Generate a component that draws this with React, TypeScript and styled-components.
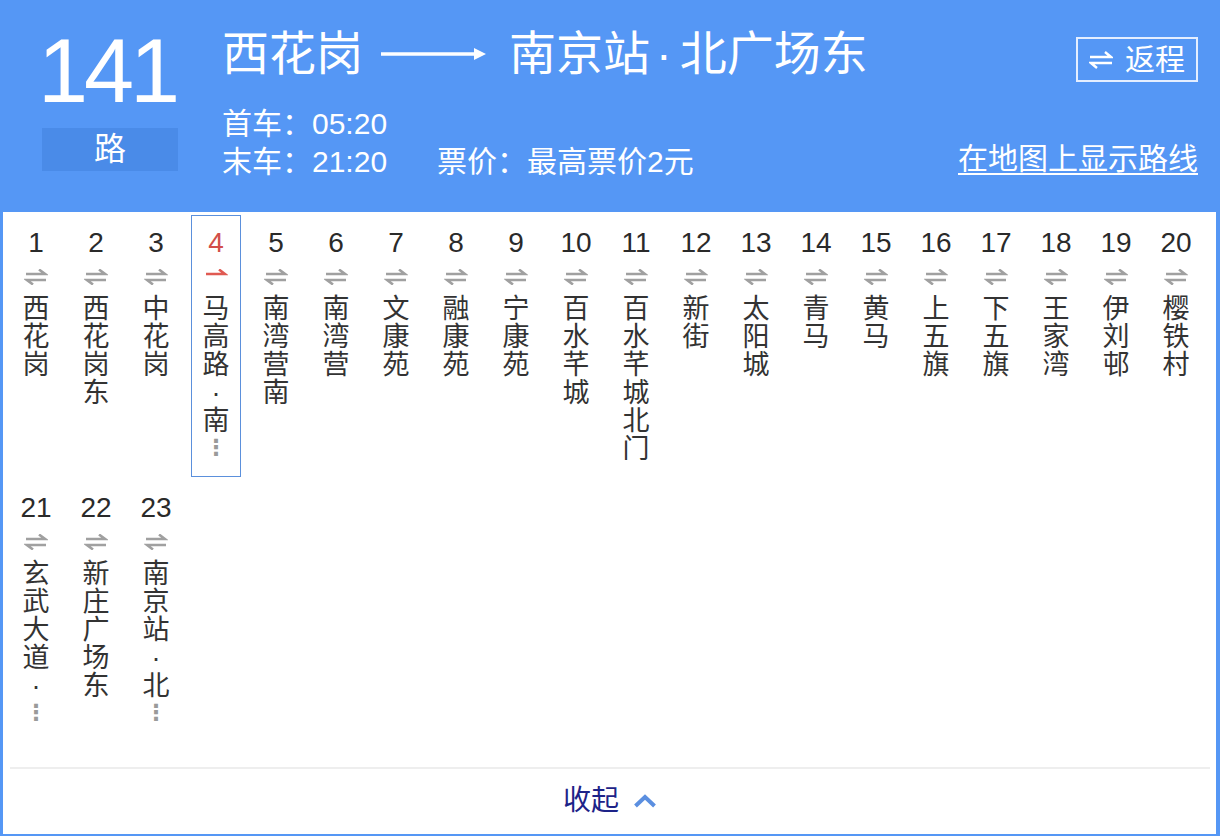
import React from 'react';
import styled, { createGlobalStyle } from 'styled-components';

const BLUE = '#5597f5';
const FONT = "'Liberation Sans', 'Noto Sans CJK SC', sans-serif";

const GlobalStyle = createGlobalStyle`
  html, body {
    margin: 0;
    padding: 0;
    background: #fff;
  }
  body {
    font-family: ${FONT};
  }
  * {
    box-sizing: border-box;
  }
`;

type Station = { name: string; clipped?: boolean };

const stations: Station[] = [
  { name: '西花岗' },
  { name: '西花岗东' },
  { name: '中花岗' },
  { name: '马高路·南', clipped: true },
  { name: '南湾营南' },
  { name: '南湾营' },
  { name: '文康苑' },
  { name: '融康苑' },
  { name: '宁康苑' },
  { name: '百水芊城' },
  { name: '百水芊城北门' },
  { name: '新街' },
  { name: '太阳城' },
  { name: '青马' },
  { name: '黄马' },
  { name: '上五旗' },
  { name: '下五旗' },
  { name: '王家湾' },
  { name: '伊刘邨' },
  { name: '樱铁村' },
  { name: '玄武大道·', clipped: true },
  { name: '新庄广场东' },
  { name: '南京站·北', clipped: true },
];

const CURRENT = 4;

const Page = styled.div`
  width: 1220px;
  height: 836px;
  background: ${BLUE};
  display: flex;
  flex-direction: column;
  padding-bottom: 2px;
  overflow: hidden;
`;

const Header = styled.header`
  height: 212px;
  flex: none;
  display: flex;
  align-items: flex-start;
  padding: 26px 22px 0 40px;
  color: #fff;
`;

const Badge = styled.div`
  width: 138px;
  display: flex;
  flex-direction: column;
`;

const RouteNumber = styled.div`
  font-family: 'Liberation Sans', sans-serif;
  font-size: 90px;
  line-height: 90px;
  letter-spacing: -4px;
  margin-left: -2px;
  white-space: nowrap;
`;

const RouteUnit = styled.div`
  margin: 12px 0 0 2px;
  height: 43px;
  background: #4a8be8;
  font-size: 32px;
  line-height: 43px;
  text-align: center;
`;

const Info = styled.div`
  flex: 1;
  margin-left: 44px;
  display: flex;
  flex-direction: column;
`;

const TitleRow = styled.div`
  display: flex;
  align-items: center;
  height: 56px;
  font-size: 47px;
  line-height: 56px;
  white-space: nowrap;
`;

const Dot = styled.span`
  padding: 0 8px 0 6px;
`;

const TitleArrow = styled.svg`
  margin: 0 22px 0 18px;
  flex: none;
`;

const Times = styled.div`
  margin-top: 23px;
  font-size: 30px;
  line-height: 38px;
  white-space: nowrap;
`;

const Fare = styled.span`
  margin-left: 50px;
`;

const Side = styled.div`
  display: flex;
  flex-direction: column;
  align-items: flex-end;
`;

const ReturnButton = styled.button`
  margin-top: 11px;
  height: 45px;
  width: 122px;
  border: 2px solid #e4eeff;
  background: transparent;
  color: #fff;
  font-family: ${FONT};
  font-size: 30px;
  line-height: 1;
  display: flex;
  align-items: center;
  justify-content: center;
  gap: 12px;
  padding: 0;
  cursor: pointer;
`;

const MapLink = styled.a`
  margin-top: 58px;
  color: #fff;
  font-size: 30px;
  line-height: 38px;
  text-decoration: underline;
  text-underline-offset: 4px;
  text-decoration-thickness: 2px;
  white-space: nowrap;
`;

const Body = styled.main`
  flex: 1;
  margin: 0 4px 0 3px;
  background: #fff;
  display: flex;
  flex-direction: column;
`;

const StationGrid = styled.ul`
  flex: 1;
  list-style: none;
  margin: 0;
  padding: 0 0 0 3px;
  display: flex;
  flex-wrap: wrap;
  align-content: flex-start;
`;

const Stop = styled.li<{ $current: boolean }>`
  width: 50px;
  height: 262px;
  margin: 3px 5px 0;
  border: 1px solid ${(p) => (p.$current ? '#5b90dc' : 'transparent')};
  display: flex;
  flex-direction: column;
  align-items: center;
  padding-top: 11px;
`;

const StopIndex = styled.div<{ $current: boolean }>`
  font-family: 'Liberation Sans', sans-serif;
  font-size: 28px;
  line-height: 32px;
  color: ${(p) => (p.$current ? '#d24f49' : '#2a2a2a')};
  white-space: nowrap;
`;

const Direction = styled.svg`
  margin-top: 10px;
  flex: none;
`;

const StopName = styled.div`
  margin-top: 10px;
  display: flex;
  flex-direction: column;
  align-items: center;
`;

const Char = styled.span`
  display: block;
  width: 30px;
  height: 28px;
  font-size: 27px;
  line-height: 28px;
  text-align: center;
  color: #333;
`;

const More = styled.span`
  display: block;
  width: 30px;
  height: 28px;
  font-family: 'DejaVu Sans', sans-serif;
  font-size: 22px;
  font-weight: bold;
  line-height: 26px;
  text-align: center;
  color: #9a9a9a;
`;

const Footer = styled.footer`
  flex: none;
  height: 67px;
  margin: 0 6px 0 7px;
  border-top: 2px solid #eeeeee;
  display: flex;
  align-items: center;
  justify-content: center;
  gap: 14px;
  padding-bottom: 2px;
`;

const Collapse = styled.span`
  font-size: 28px;
  line-height: 34px;
  color: #1d2388;
`;

function SwapIcon({ color, onlyForward }: { color: string; onlyForward?: boolean }) {
  return (
    <Direction width="24" height="16" viewBox="0 0 24 16">
      <path d="M2 5H21L15 0.5" fill="none" stroke={color} strokeWidth="2.6" strokeLinejoin="miter" />
      {!onlyForward && (
        <path d="M22 11H3L9 15.5" fill="none" stroke={color} strokeWidth="2.6" strokeLinejoin="miter" />
      )}
    </Direction>
  );
}

export default function App() {
  return (
    <>
      <GlobalStyle />
      <Page>
        <Header>
          <Badge>
            <RouteNumber>141</RouteNumber>
            <RouteUnit>路</RouteUnit>
          </Badge>
          <Info>
            <TitleRow>
              <span>西花岗</span>
              <TitleArrow width="106" height="20" viewBox="0 0 106 20">
                <path d="M0 10H100" stroke="#fff" strokeWidth="3.5" />
                <path d="M93 4L105 10L93 16Z" fill="#fff" />
              </TitleArrow>
              <span>南京站</span>
              <Dot>·</Dot>
              <span>北广场东</span>
            </TitleRow>
            <Times>
              <div>首车：05:20</div>
              <div>
                末车：21:20<Fare>票价：最高票价2元</Fare>
              </div>
            </Times>
          </Info>
          <Side>
            <ReturnButton type="button">
              <svg width="24" height="18" viewBox="0 0 24 18">
                <path d="M1 6H22L16 1" fill="none" stroke="#fff" strokeWidth="2.4" />
                <path d="M23 12H2L8 17" fill="none" stroke="#fff" strokeWidth="2.4" />
              </svg>
              <span>返程</span>
            </ReturnButton>
            <MapLink>在地图上显示路线</MapLink>
          </Side>
        </Header>
        <Body>
          <StationGrid>
            {stations.map((s, i) => {
              const idx = i + 1;
              const current = idx === CURRENT;
              return (
                <Stop key={idx} $current={current}>
                  <StopIndex $current={current}>{idx}</StopIndex>
                  <SwapIcon color={current ? '#e05a52' : '#a0a0a0'} onlyForward={current} />
                  <StopName>
                    {Array.from(s.name).map((c, k) => (
                      <Char key={k}>{c}</Char>
                    ))}
                    {s.clipped && <More>⋮</More>}
                  </StopName>
                </Stop>
              );
            })}
          </StationGrid>
          <Footer>
            <Collapse>收起</Collapse>
            <svg width="24" height="14" viewBox="0 0 24 14">
              <path d="M2.5 12L12 3L21.5 12" fill="none" stroke="#5b8fe0" strokeWidth="4" />
            </svg>
          </Footer>
        </Body>
      </Page>
    </>
  );
}
